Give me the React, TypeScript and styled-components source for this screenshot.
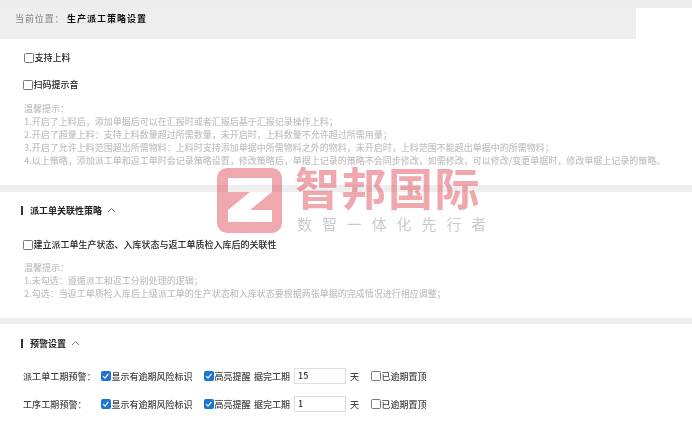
import React from "react";
import styled, { createGlobalStyle } from "styled-components";

const Global = createGlobalStyle`
  html, body { margin: 0; padding: 0; background: #fff; }
  body { font-family: "Noto Sans CJK SC", "Liberation Sans", sans-serif; overflow: hidden; }
  * { box-sizing: border-box; }
`;

const Page = styled.div`
  position: relative;
  width: 692px;
  height: 422px;
  overflow: hidden;
  background: #fff;
  color: #444;
  font-size: 9px;
  filter: blur(0.4px);
`;
const TopStrip = styled.div`height: 8px; background: #ececec;`;
const Breadcrumb = styled.div`
  width: 636px;
  height: 31px;
  background: #eeeeee;
  display: flex;
  align-items: center;
  padding: 0 0 9px 15px;
  font-size: 9px;
  line-height: 12px;
`;
const CrumbLabel = styled.span`color: #8f8f8f; width: 52px; letter-spacing: 0.9px; font-weight: 500;`;
const CrumbTitle = styled.b`color: #111; font-weight: 700; letter-spacing: 1px;`;
const Section = styled.section<{ $h: number; $pad: string }>`
  height: ${p => p.$h}px;
  padding: ${p => p.$pad};
`;
const Divider = styled.div<{ $h: number }>`height: ${p => p.$h}px; background: #eeeeee;`;
const OptionRow = styled.label<{ $x: number; $mb: number; $mt?: number }>`
  display: flex;
  align-items: center;
  margin-left: ${p => p.$x}px;
  margin-top: ${p => p.$mt ?? 0}px;
  margin-bottom: ${p => p.$mb}px;
  height: 12px;
  color: #222;
  font-weight: 500;
  line-height: 12px;
`;
const Box = styled.span<{ $on?: boolean }>`
  width: 9.5px;
  height: 9.5px;
  flex: none;
  border-radius: 1.5px;
  border: 1px solid ${p => (p.$on ? "#1a76d2" : "#777")};
  background: ${p => (p.$on ? "#1a76d2" : "#fff")};
  margin-right: 1px;
  display: inline-flex;
  align-items: center;
  justify-content: center;
`;
const Tips = styled.div<{ $x: number }>`
  margin-left: ${p => p.$x}px;
  color: #c2c2c2;
  line-height: 12.9px;
  white-space: nowrap;
  font-size: 9px;
  font-weight: 500;
`;
const Heading = styled.div`
  display: flex;
  align-items: center;
  height: 12px;
  margin-left: 21px;
  font-weight: 700;
  color: #222;
`;
const Bar = styled.i`width: 1.5px; height: 9px; background: #333; margin-right: 7.5px;`;
const Chevron = styled.svg`margin-left: 5px;`;
const FormRow = styled.div<{ $mb: number; $mt?: number }>`
  display: flex;
  align-items: center;
  height: 16px;
  margin-left: 23px;
  margin-top: ${p => p.$mt ?? 0}px;
  margin-bottom: ${p => p.$mb}px;
  color: #444;
  font-weight: 500;
  white-space: nowrap;
`;
const FieldLabel = styled.span`width: 78px; letter-spacing: 0.1px;`;
const Check = styled.span<{ $w: number }>`
  display: inline-flex;
  align-items: center;
  width: ${p => p.$w}px;
  flex: none;
`;
const Input = styled.div`
  width: 52px;
  height: 16px;
  border: 1px solid #dedede;
  padding-left: 3px;
  line-height: 14px;
  color: #333;
  margin: 0 4px 0 4px;
`;
const Day = styled.span`width: 21px;`;
const Mark = styled.div`
  position: absolute;
  left: 217px;
  top: 168px;
  display: flex;
  pointer-events: none;
`;
const MarkText = styled.div`margin-left: 13px; margin-top: -7px;`;
const MarkName = styled.div`
  font-size: 45px;
  line-height: 52px;
  font-weight: 700;
  letter-spacing: 1.5px;
  color: rgba(226, 96, 106, 0.55);
  white-space: nowrap;
`;
const MarkSub = styled.div`
  font-size: 15px;
  line-height: 22px;
  letter-spacing: 9.9px;
  color: rgba(150, 150, 150, 0.5);
  margin-left: 2px;
  white-space: nowrap;
`;

const Tick = () => (
  <svg width="8" height="8" viewBox="0 0 8 8" fill="none">
    <path d="M1.2 4.2 3.2 6.2 6.9 1.8" stroke="#fff" strokeWidth="1.3" />
  </svg>
);
const Up = () => (
  <Chevron width="9" height="6" viewBox="0 0 9 6" fill="none">
    <path d="M1 5 4.5 1.5 8 5" stroke="#666" strokeWidth="0.9" />
  </Chevron>
);
const Logo = () => (
  <svg width="65" height="65" viewBox="0 0 65 65">
    <path
      fillRule="evenodd"
      fill="rgba(226,96,106,0.55)"
      d="M10 0h45a10 10 0 0 1 10 10v45a10 10 0 0 1-10 10H10A10 10 0 0 1 0 55V10A10 10 0 0 1 10 0ZM11 10H55V24L33 42H55V54H11V42L33 24H11Z"
    />
  </svg>
);

const Row = ({ value }: { value: string }) => (
  <>
    <Check $w={103}><Box $on><Tick /></Box>显示有逾期风险标识</Check>
    <Check $w={50}><Box $on><Tick /></Box>高亮提醒</Check>
    <span>据完工期</span>
    <Input>{value}</Input>
    <Day>天</Day>
    <Check $w={60}><Box />已逾期置顶</Check>
  </>
);

export default function App() {
  return (
    <Page>
      <Global />
      <TopStrip />
      <Breadcrumb>
        <CrumbLabel>当前位置：</CrumbLabel>
        <CrumbTitle>生产派工策略设置</CrumbTitle>
      </Breadcrumb>
      <Section $h={146} $pad="13px 0 0 0">
        <OptionRow $x={24} $mb={15}><Box />支持上料</OptionRow>
        <OptionRow $x={23} $mb={12}><Box />扫码提示音</OptionRow>
        <Tips $x={24}>
          温馨提示：<br />
          1.开启了上料后，添加单据后可以在汇报时或者汇报后基于汇报记录操作上料；<br />
          2.开启了超量上料：支持上料数量超过所需数量，未开启时，上料数量不允许超过所需用量；<br />
          3.开启了允许上料范围超出所需物料：上料时支持添加单据中所需物料之外的物料，未开启时，上料范围不能超出单据中的所需物料；<br />
          4.以上策略，添加派工单和返工单时会记录策略设置，修改策略后，单据上记录的策略不会同步修改，如需修改，可以修改/变更单据时，修改单据上记录的策略。
        </Tips>
      </Section>
      <Divider $h={7} />
      <Section $h={126} $pad="12px 0 0 0">
        <Heading><Bar />派工单关联性策略<Up /></Heading>
        <OptionRow $x={23} $mt={23} $mb={11}><Box />建立派工单生产状态、入库状态与返工单质检入库后的关联性</OptionRow>
        <Tips $x={24}>
          温馨提示：<br />
          1.未勾选：遵循派工和返工分别处理的逻辑；<br />
          2.勾选：当返工单质检入库后上级派工单的生产状态和入库状态要根据两张单据的完成情况进行相应调整；
        </Tips>
      </Section>
      <Divider $h={6} />
      <Section $h={98} $pad="13px 0 0 0">
        <Heading><Bar />预警设置<Up /></Heading>
        <FormRow $mt={19} $mb={12}><FieldLabel>派工单工期预警：</FieldLabel><Row value="15" /></FormRow>
        <FormRow $mb={0}><FieldLabel>工序工期预警：</FieldLabel><Row value="1" /></FormRow>
      </Section>
      <Mark>
        <Logo />
        <MarkText>
          <MarkName>智邦国际</MarkName>
          <MarkSub>数智一体化先行者</MarkSub>
        </MarkText>
      </Mark>
    </Page>
  );
}
